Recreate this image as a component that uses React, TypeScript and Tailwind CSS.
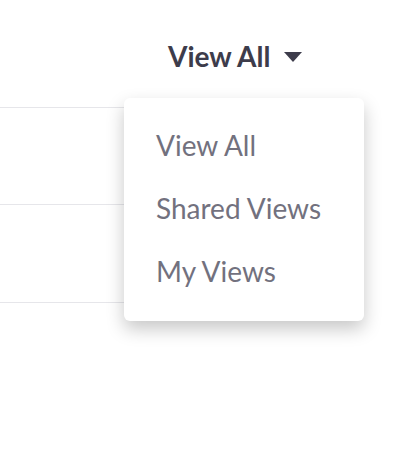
import { useState } from "react";

const options = ["View All", "Shared Views", "My Views"];

export default function App() {
	const [selected, setSelected] = useState("View All");

	return (
		<div
			className="relative h-[456px] w-[406px] overflow-hidden bg-white"
			style={{ fontFamily: "Lato, 'Open Sans', sans-serif" }}
		>
			{/* header with the views dropdown trigger */}
			<div className="flex h-[107px] items-start pl-[168px] pt-[39px]">
				<button className="flex items-center gap-[14px] text-[28px] font-bold leading-[34px] text-[#3d3c4b]">
					{selected}
					<svg width="18" height="10" viewBox="0 0 18 10" className="mt-[2px]">
						<path d="M0 0h18L9 10z" fill="#3d3c4b" />
					</svg>
				</button>
			</div>

			{/* table rows behind the menu */}
			<div className="w-[220px]">
				<div className="h-[97px] border-t border-[#e6e6ea]" />
				<div className="h-[98px] border-t border-[#e6e6ea]" />
				<div className="h-[98px] border-t border-[#e6e6ea]" />
			</div>

			{/* dropdown menu */}
			<div className="absolute left-[124px] top-[98px] w-[240px] rounded-[6px] bg-white pb-[19px] pt-[15px] shadow-[0_8px_18px_rgba(0,0,0,0.22)]">
				{options.map((opt) => (
					<div
						key={opt}
						onClick={() => setSelected(opt)}
						className="flex h-[63px] cursor-pointer items-center pl-[32px] text-[28px] leading-none text-[#72717e]"
					>
						{opt}
					</div>
				))}
			</div>
		</div>
	);
}
